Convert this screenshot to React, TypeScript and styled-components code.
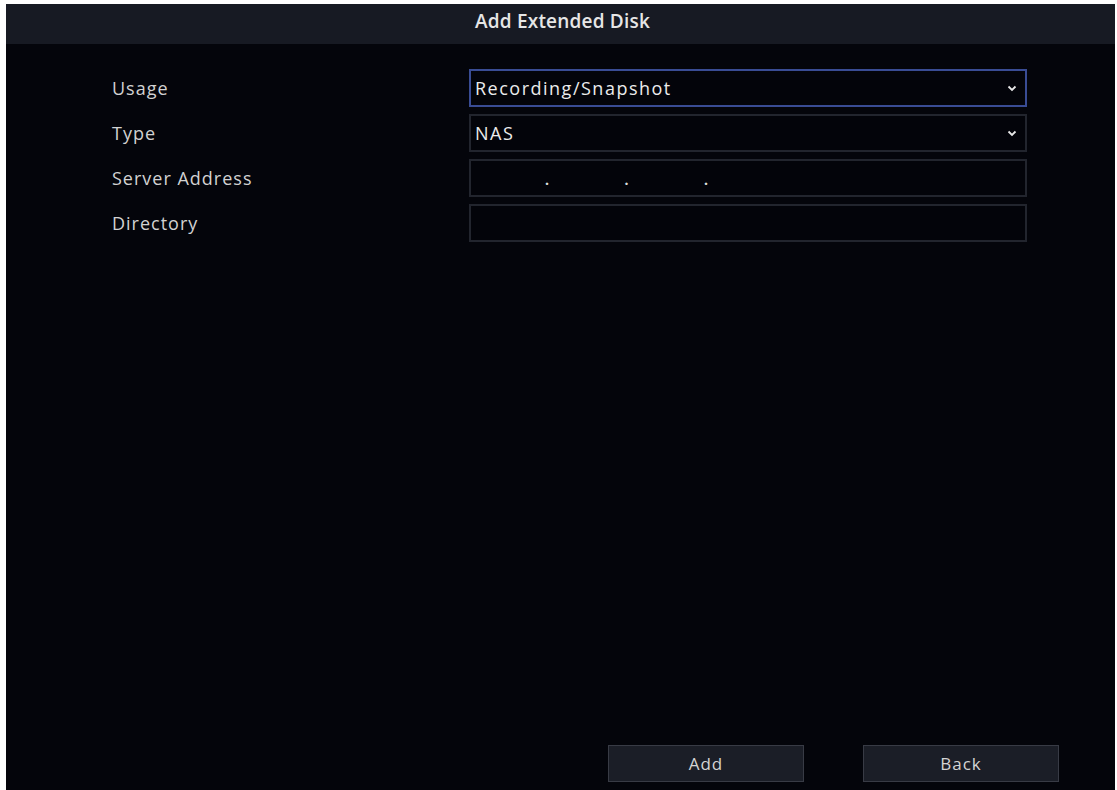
import React from 'react';
import styled, { createGlobalStyle } from 'styled-components';

const GlobalStyle = createGlobalStyle`
  html, body {
    margin: 0;
    padding: 0;
    background: #ffffff;
  }
  body {
    font-family: "Open Sans", "Liberation Sans", sans-serif;
  }
`;

const Screen = styled.div`
  margin: 4px 2px 0 6px;
  height: 786px;
  background: #04050b;
  display: flex;
  flex-flow: column;
`;

const TitleBar = styled.div`
  box-sizing: border-box;
  height: 40px;
  padding: 0 0 6px 4px;
  background: #171a23;
  display: flex;
  align-items: center;
  justify-content: center;
  color: #e6e6e6;
  font-size: 19px;
  font-weight: 600;
  letter-spacing: 0.2px;
`;

const Fields = styled.div`
  display: grid;
  grid-template-columns: 357px 558px;
  grid-auto-rows: 38px;
  row-gap: 7px;
  padding: 25px 0 0 106px;
`;

const Label = styled.label`
  display: flex;
  align-items: center;
  color: #d2d2d2;
  font-size: 18px;
  letter-spacing: 1px;
`;

const Box = styled.div<{ focused?: boolean }>`
  display: flex;
  align-items: center;
  justify-content: space-between;
  box-sizing: border-box;
  padding: 0 8px 0 4px;
  background: #03040a;
  border: 2px solid ${(p) => (p.focused ? '#394c94' : '#22252e')};
  color: #ececec;
  font-size: 18px;
  letter-spacing: 1.5px;
`;

const IpDots = styled.div`
  display: flex;
  gap: 74px;
  padding-left: 70px;
  color: #e0e0e0;
  font-size: 14px;
  font-weight: 700;
  line-height: 1;
  padding-top: 4px;
`;

const Footer = styled.div`
  margin-top: auto;
  display: flex;
  justify-content: flex-end;
  gap: 59px;
  padding: 0 56px 8px 0;
`;

const Button = styled.button`
  width: 196px;
  height: 37px;
  background: #1b1e27;
  border: 1px solid #383b45;
  color: #d4d4d4;
  font-family: "Open Sans", "Liberation Sans", sans-serif;
  font-size: 17px;
  letter-spacing: 1px;
  padding: 0;
`;

const Chevron = () => (
  <svg width="10" height="7" viewBox="0 0 10 7">
    <path d="M1.5 1.5 L5 5 L8.5 1.5" fill="none" stroke="#e8e8e8" strokeWidth="1.8" />
  </svg>
);

const App = () => {
  return (
    <>
      <GlobalStyle />
      <Screen>
        <TitleBar>Add Extended Disk</TitleBar>
        <Fields>
          <Label>Usage</Label>
          <Box focused>
            <span>Recording/Snapshot</span>
            <Chevron />
          </Box>
          <Label>Type</Label>
          <Box>
            <span>NAS</span>
            <Chevron />
          </Box>
          <Label>Server Address</Label>
          <Box>
            <IpDots>
              <span>.</span>
              <span>.</span>
              <span>.</span>
            </IpDots>
          </Box>
          <Label>Directory</Label>
          <Box />
        </Fields>
        <Footer>
          <Button>Add</Button>
          <Button>Back</Button>
        </Footer>
      </Screen>
    </>
  );
};

export default App;
